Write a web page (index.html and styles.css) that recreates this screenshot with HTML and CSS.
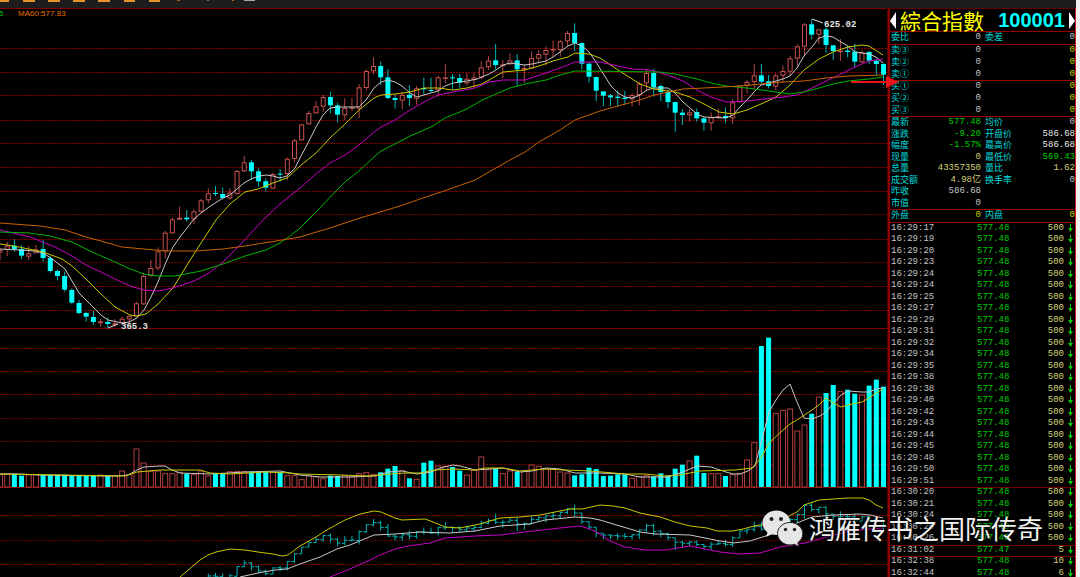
FILE: index.html
```html
<!DOCTYPE html>
<html lang="zh">
<head>
    <meta charset="UTF-8">
    <meta name="viewport" content="width=device-width, initial-scale=1.0">
    <title>綜合指數 100001</title>
    <link rel="stylesheet" href="styles.css">
</head>
<body>
    <div class="app">
        <div class="main">
            <div class="toolbar">
                <svg width="260" height="3" viewBox="0 0 260 3">
                    <path d="M0 0h9v2H0zM23 0h12v2H23zM48 0h12v2H48zM73 0h12v2H73zM98 0h12v2H98zM124 0h11v2h-11zM149 0h11v2h-11z" fill="#e8922e"/>
                    <path d="M177 0h3v1h-3zM207 0h2v1h-2zM232 0h2v1h-2z" fill="#a5652a"/>
                    <path d="M244 0h11v1h-11z" fill="#aaa"/>
                </svg>
            </div>
            <div class="content">
                <div class="chart">
                    <svg id="chart" viewBox="0 8 888 569"></svg>
                </div>
                <div class="panel">
                    <div class="title">
                        <svg width="6" height="17" viewBox="0 0 6 17"><path d="M6 0v17L0 9z" fill="#fff"/></svg>
                        <span class="name">綜合指數</span>
                        <span class="code">100001</span>
                        <svg width="6" height="17" viewBox="0 0 6 17"><path d="M0 0v17l6-8z" fill="#fff"/></svg>
                    </div>
                    <table class="quote">
                        <tbody>
                            <tr><th>委比</th><td>0</td><th>委差</th><td>0</td></tr>
                        </tbody>
                        <tbody class="book">
                            <tr><th>卖③</th><td>0</td><th></th><td>0</td></tr>
                            <tr><th>卖②</th><td>0</td><th></th><td>0</td></tr>
                            <tr><th>卖①</th><td>0</td><th></th><td>0</td></tr>
                        </tbody>
                        <tbody class="book">
                            <tr><th>买①</th><td>0</td><th></th><td>0</td></tr>
                            <tr><th>买②</th><td>0</td><th></th><td>0</td></tr>
                            <tr><th>买③</th><td>0</td><th></th><td>0</td></tr>
                        </tbody>
                        <tbody class="detail">
                            <tr><th>最新</th><td class="down">577.48</td><th>均价</th><td>0</td></tr>
                            <tr><th>涨跌</th><td class="down">-9.20</td><th>开盘价</th><td class="white">586.68</td></tr>
                            <tr><th>幅度</th><td class="down">-1.57%</td><th>最高价</th><td class="white">586.68</td></tr>
                            <tr><th>现量</th><td class="vol">0</td><th>最低价</th><td class="down">569.43</td></tr>
                            <tr><th>总量</th><td class="vol">43357350</td><th>量比</th><td class="vol">1.62</td></tr>
                            <tr><th>成交额</th><td class="vol">4.98亿</td><th>换手率</th><td>0</td></tr>
                            <tr><th>昨收</th><td>586.68</td><th></th><td></td></tr>
                            <tr><th>市值</th><td>0</td><th></th><td></td></tr>
                        </tbody>
                        <tbody>
                            <tr><th>外盘</th><td class="yellow">0</td><th>内盘</th><td class="yellow">0</td></tr>
                        </tbody>
                    </table>
                    <table class="ticks">
                        <tbody id="ticks"></tbody>
                    </table>
                </div>
            </div>
        </div>
        <div class="edge"></div>

        <svg class="pointer" width="48" height="14" viewBox="0 0 48 14">
            <path d="M0 6h35V1l13 6-13 6V8H0z" fill="#e8161b"/>
        </svg>

        <div class="watermark">
            <svg width="42" height="38" viewBox="0 0 42 38">
                <path d="M14.500 1.500C6.500 1.500 0.500 7 0.500 14c0 4 2 7 5 9.500L4 28l5.500-3c1.500.6 3.300.9 5 .9 8 0 14-5.500 14-12S22.500 1.500 14.500 1.500z" fill="#e6e6e6"/>
                <circle cx="9.500" cy="10" r="2" fill="#222"/>
                <circle cx="19" cy="10" r="2" fill="#222"/>
                <path d="M28 13.500c-7 0-12.500 5-12.500 11S21 36 28 36c1.500 0 3-.3 4.500-.7l4.500 2.400-1.200-4c3-2.200 5-5.200 5-9C40.800 18.500 35 13.500 28 13.500z" fill="#e6e6e6" stroke="#222"/>
                <circle cx="23.500" cy="20.500" r="1.700" fill="#222"/>
                <circle cx="32.500" cy="20.500" r="1.700" fill="#222"/>
            </svg>
            <span>鸿雁传书之国际传奇</span>
        </div>
    </div>
    <script src="script.js"></script>
</body>
</html>
```
FILE: styles.css
```css
body {
    margin: 0;
    background-color: #000;
    color: #c4c4c4;
    font-family: "Liberation Mono", "Noto Sans CJK SC", monospace;
    font-size: 9px;
}
.app {
    position: relative;
    display: flex;
    height: 100vh;
    overflow: hidden;
}
.main {
    flex: 1;
    min-width: 0;
}
.edge {
    width: 4px;
    background: #f0f0f0;
}
.toolbar {
    height: 8px;
    background: #1d1d1d;
}
.toolbar svg {
    display: block;
}
.content {
    display: flex;
}
.chart {
    flex: 1;
    min-width: 0;
}
.chart svg {
    display: block;
    width: 100%;
}
.chart text {
    font-weight: bold;
    fill: #e6e6e6;
}
.chart .legend {
    font-family: "Liberation Sans", sans-serif;
    font-size: 8px;
    font-weight: normal;
}

/* right side */
.panel {
    box-sizing: border-box;
    width: 188px;
    border-left: 2px solid #800;
    border-right: 1px solid #c22;
    border-top: 1px solid #600;
}
.title {
    display: flex;
    align-items: center;
    height: 22px;
    line-height: 20px;
}
.title .name {
    margin-left: 4px;
    color: #ff0;
    font-family: "Noto Sans CJK TC", sans-serif;
    font-size: 21px;
}
.title .code {
    margin: 0 4px 0 auto;
    color: #0ff;
    font-family: "Liberation Sans", sans-serif;
    font-size: 20px;
    font-weight: bold;
}
table {
    width: 100%;
    table-layout: fixed;
    border-collapse: collapse;
}
th, td {
    padding: 0;
    height: 12px;
    line-height: 10px;
    vertical-align: top;
    white-space: nowrap;
    text-align: right;
}
th {
    padding-left: 1px;
    color: #00dcdc;
    font-weight: normal;
    font-family: "Noto Sans CJK SC", sans-serif;
    text-align: left;
}
.quote th {
    width: 30px;
}
.quote th:nth-child(3) {
    padding-left: 4px;
}
.quote td:nth-child(2) {
    width: 60px;
}
.quote tbody {
    border-top: 1px solid #900;
}
.quote .book td:last-child, .yellow {
    color: #d2d200;
}
.quote .book tr:last-child > *, .detail tr:nth-child(even) > * {
    height: 11px;
}
.quote .down, .ticks .down {
    color: #00cc00;
}
.vol {
    color: #d2d278;
}
.white {
    color: #e8e8e8;
}
.ticks {
    border-top: 1px solid #900;
}
.ticks tr:nth-child(odd) > td {
    height: 11px;
}
.ticks td:nth-child(1) {
    width: 86px;
    padding-left: 1px;
    text-align: left;
}
.ticks td:nth-child(2) {
    width: 34px;
    text-align: left;
}
.ticks td:nth-child(3) {
    padding-right: 3px;
}
.ticks td:last-child {
    width: 8px;
}
.ticks .minute td {
    box-shadow: inset 0 1px #700;
}
.ticks svg {
    display: block;
    margin: 1px 0 0 1px;
}

/* overlays */
.pointer {
    position: absolute;
    top: 75px;
    right: 181px;
}
.watermark {
    position: absolute;
    right: 37px;
    bottom: 30px;
    display: flex;
    align-items: center;
    gap: 5px;
    color: #f0f0f0;
    font-family: "Noto Sans CJK SC", sans-serif;
    font-size: 26px;
    line-height: 38px;
    text-shadow: 1px 1px 2px #000;
    white-space: nowrap;
}
```
FILE: script.js
```js
// [up, high, body top, body bottom, low], in thirds of a pixel
const candles = [
    [1,745,750,758,780],[1,725,737,750,768],[0,718,737,747,755],[0,735,747,767,777],[1,738,760,770,780],
    [1,735,748,760,760],[0,720,747,774,785],[0,768,774,813,818],[0,808,813,828,841],[0,815,828,869,875],
    [0,865,870,908,913],[0,900,909,939,943],[0,935,939,950,965],[0,933,951,966,975],[1,957,964,969,980],
    [0,953,966,972,984],[1,958,970,975,980],[1,950,956,970,975],[1,945,948,958,970],[1,905,910,950,950],
    [1,818,828,913,915],[1,780,804,828,830],[1,742,754,805,810],[1,693,698,754,775],[1,653,658,700,700],
    [1,620,653,659,660],[0,630,653,658,665],[1,628,634,658,673],[1,597,601,635,638],[1,565,580,601,610],
    [0,558,579,582,588],[0,562,582,594,598],[1,565,578,595,600],[1,510,513,582,582],[1,468,487,514,516],
    [0,480,487,514,540],[0,505,514,544,560],[0,535,544,563,575],[1,518,522,566,566],[0,507,521,524,545],
    [1,473,476,522,540],[1,417,421,477,487],[1,372,373,421,421],[1,333,339,373,373],[1,303,319,340,340],
    [1,285,291,320,335],[0,275,291,316,340],[0,308,316,344,368],[1,295,324,346,360],[1,293,322,326,333],
    [1,253,262,326,354],[1,208,213,264,270],[1,172,198,214,223],[0,185,198,232,255],[0,208,232,294,297],
    [0,283,294,300,326],[1,275,285,302,328],[0,255,284,294,318],[1,258,265,296,314],[0,233,264,268,283],
    [0,233,270,273,278],[1,227,232,271,290],[1,193,232,236,250],[0,223,232,235,268],[0,222,234,248,263],
    [1,218,236,250,256],[1,218,232,240,264],[1,184,202,233,238],[1,168,182,202,210],[0,132,181,195,208],
    [1,180,194,197,234],[1,160,181,193,195],[0,162,181,208,258],[1,195,204,209,248],[1,155,174,206,206],
    [1,150,162,176,188],[1,140,150,164,197],[1,122,147,151,172],[1,120,124,150,170],[1,93,99,124,137],
    [0,70,99,129,153],[0,128,129,191,208],[0,187,191,230,248],[0,230,231,272,303],[0,274,274,287,318],
    [0,283,286,292,318],[0,272,290,294,320],[0,272,293,297,314],[1,280,285,298,320],[1,245,251,285,316],
    [1,207,219,250,270],[0,207,219,262,290],[0,253,258,276,303],[0,270,276,306,325],[0,306,306,338,395],
    [0,328,338,345,375],[1,327,337,346,365],[0,325,336,355,365],[0,353,355,368,392],[1,337,352,370,392],
    [1,325,348,352,357],[0,322,348,354,370],[1,297,307,355,372],[1,256,257,307,307],[1,240,246,257,280],
    [1,192,226,246,265],[0,192,226,245,255],[0,225,244,258,265],[1,220,226,260,270],[1,197,213,227,248],
    [1,168,175,215,228],[1,133,139,176,198],[1,69,73,140,168],[0,58,73,104,118],[1,88,88,104,132],
    [0,80,88,135,158],[0,135,136,153,180],[1,117,152,156,183],[0,138,152,156,172],[0,132,155,185,203],
    [1,150,157,187,190],[0,152,156,182,192],[0,178,182,192,225],[0,190,192,224,255]
];

// bar heights, same unit
const volumes = [
    37,39,40,34,36,37,37,37,37,37,35,36,35,35,36,35,34,48,37,114,72,47,48,40,40,44,40,37,48,33,41,41,
    46,47,46,46,46,45,44,45,34,34,22,34,31,25,34,33,34,31,40,43,38,44,55,63,49,26,23,73,79,63,62,60,
    49,36,50,90,52,56,40,48,46,48,66,62,54,54,45,42,35,38,58,54,33,34,38,38,26,32,34,32,41,34,55,67,
    78,94,42,40,40,33,37,41,81,133,423,448,221,230,234,168,186,220,270,282,306,286,292,280,276,304,322,301
];

const lines = [
    ["#c8c8c8", "0,249 20,250 35,251 43,253 51,258 65,269 72,281 79,293 94,308 101,315 108,320 122,323 129,322 137,318 144,310 151,297 158,282 166,262 173,247 180,237 187,228 194,219 201,213 209,207 223,198 230,195 237,189 244,183 251,179 259,176 266,175 273,176 280,178 287,176 295,168 300,158 309,141 316,127 323,115 330,108 338,107 359,107 366,100 374,88 381,82 388,80 395,82 402,86 410,93 417,97 424,95 431,93 438,91 445,86 453,83 467,81 477,79 489,74 496,70 503,65 510,63 525,65 532,64 546,61 553,57 560,52 568,46 575,43 582,46 589,52 596,62 604,75 611,86 618,93 625,97 632,98 640,95 647,90 654,88 668,88 675,93 683,102 690,108 697,114 704,117 726,118 733,115 740,107 747,100 754,92 761,85 769,83 783,79 790,76 797,68 804,56 812,47 819,38 826,36 833,37 841,42 848,46 855,52 862,53 869,54 876,57 883,63"],
    ["#c8c800", "0,244 14,246 43,252 62,259 72,266 86,279 101,294 115,307 130,315 137,316 146,314 158,304 173,288 187,265 201,243 216,220 230,204 245,192 258,189 273,183 287,178 300,166 316,153 330,138 345,124 359,110 374,98 381,95 395,94 410,92 424,88 438,88 453,90 467,88 482,84 496,76 503,72 525,70 539,66 553,61 568,57 575,53 589,54 600,58 618,70 640,84 654,89 675,92 690,97 704,104 719,112 733,114 747,110 761,104 776,97 790,85 804,70 819,59 833,52 848,47 862,45 869,46 883,55"],
    ["#c800c8", "0,230 30,237 55,247 72,256 86,265 101,272 115,279 130,286 144,290 158,291 173,288 194,281 209,273 223,262 237,248 251,233 266,217 280,204 300,188 316,174 330,163 345,155 359,145 374,132 381,127 395,120 410,110 424,102 438,95 453,92 475,88 489,82 503,80 525,80 546,73 560,68 575,62 600,62 618,66 632,69 650,70 668,75 683,81 697,90 711,97 726,102 747,101 783,97 797,95 812,88 826,81 841,74 855,67 869,61 883,59"],
    ["#00b400", "0,232 30,233 50,236 72,242 86,249 101,256 115,262 130,269 144,274 158,276 175,276 201,271 223,264 245,256 266,250 280,243 290,236 300,228 316,212 337,190 345,182 359,171 374,157 381,151 395,144 410,136 431,127 445,118 467,109 482,100 496,94 510,88 525,84 546,80 560,75 575,71 660,72 675,74 697,79 711,83 726,86 747,88 769,91 790,94 804,92 819,88 833,84 848,81 869,79 883,77"],
    ["#c86400", "0,223 40,226 65,230 86,237 101,241 122,247 144,249 166,251 195,251 223,249 245,246 270,242 300,237 330,228 360,218 400,206 420,199 447,190 475,180 496,168 510,160 525,152 539,142 560,130 575,120 600,111 618,106 640,100 654,95 668,92 683,89 704,88 740,86 761,84 783,82 804,81 826,78 848,76 883,75"],
    // volume averages
    ["#c8c8c8", "0,474 20,474 40,475 105,476 118,476 128,475 137,470 144,467 160,466 165,466 172,470 180,473 210,474 245,472 280,471 300,475 320,477 350,477 375,476 388,472 402,471 417,474 431,472 440,468 453,465 460,466 475,470 489,469 503,468 520,472 532,471 546,468 560,469 575,473 589,473 600,473 625,474 640,477 668,477 683,472 697,466 711,467 726,472 733,474 740,474 748,471 755,466 761,443 769,412 776,400 783,390 790,384 797,402 804,418 812,419 820,416 826,412 833,404 841,395 848,391 862,392 869,392 876,389 883,388"],
    ["#c8c800", "0,474 60,475 125,476 137,472 160,470 185,470 200,470 210,473 230,474 265,472 290,473 300,474 340,475 370,476 390,474 405,473 420,473 435,470 453,469 475,470 485,468 503,468 520,471 545,469 565,470 590,471 625,474 645,474 665,476 680,475 700,471 735,470 752,468 761,458 769,443 783,430 790,424 797,420 812,410 820,404 826,398 833,403 841,407 848,405 862,402 869,398 876,393 883,389"],
    // boll
    ["#c8c800", "180,577 200,560 208,555 216,552 230,549 245,550 258,552 273,554 282,556 288,555 300,546 316,537 325,531 345,520 360,514 374,511 381,512 395,518 402,520 425,519 433,522 445,527 460,528 480,524 500,518 520,517 540,515 560,511 570,509 582,509 600,505 613,506 625,508 640,513 660,517 675,522 690,526 707,528 717,531 733,531 743,529 754,526 773,523 787,517 797,512 804,505 819,500 833,499 848,498 863,498 869,500 876,505 883,508"],
    ["#c8c8c8", "240,577 258,573 275,570 287,569 300,564 320,557 337,549 350,545 374,535 395,534 420,532 450,533 475,531 500,526 530,524 545,520 575,517 590,518 600,520 620,526 640,532 655,534 690,535 705,538 720,541 733,543 750,541 775,533 797,523 812,517 833,515 860,514 870,515 883,518"],
    ["#c800c8", "330,577 350,569 370,560 380,555 395,549 408,546 430,543 445,538 475,536 500,535 525,532 560,528 580,526 590,529 600,534 610,541 625,547 645,550 665,550 690,546 705,549 720,552 740,554 760,553 780,547 805,543 830,536 850,531 870,529 883,528"]
];

const bright = [48, 72, 95, 120, 143, 167, 191, 239, 286, 310, 348, 371, 394, 515, 564];
const dim = [214, 262, 418, 441, 464, 540];
const solid = [8, 328, 487];

let out = "";
bright.forEach(y => out += `<path d="M0 ${y + 0.5}H887" stroke="#860000" stroke-dasharray="2 1"/>`);
dim.forEach(y => out += `<path d="M0 ${y + 0.5}H887" stroke="#660000" stroke-dasharray="2 1"/>`);
solid.forEach(y => out += `<path d="M0 ${y + 0.5}H887" stroke="#880000"/>`);
out += `<path d="M887.5 9V577" stroke="#500000"/>`;

candles.forEach((c, i) => {
    const [up, high, top, bottom, low] = c.map((v, k) => k ? v / 3 : v);
    const x = 7.183 * i;
    const h = Math.max(bottom - top, 1);
    const vh = volumes[i] / 3;
    if (up) {
        out += `<path d="M${x} ${high}V${low}" stroke="#b44646"/>`;
        out += `<rect x="${x - 2}" y="${top + 0.5}" width="4" height="${Math.max(h - 1, 0.5)}" fill="#000" stroke="#c85050"/>`;
        out += `<rect x="${x - 2.5}" y="${487 - vh}" width="5" height="${vh}" fill="#000" stroke="#b04040"/>`;
    } else {
        out += `<path d="M${x} ${high}V${low}" stroke="#00b4b4"/>`;
        out += `<rect x="${x - 2.5}" y="${top}" width="5" height="${h}" fill="#0ff"/>`;
        out += `<rect x="${x - 2.5}" y="${487 - vh}" width="5" height="${vh}" fill="#0ff"/>`;
    }
    // same prices on the smaller boll scale
    const s = y => 495 + 0.419 * y;
    const open = s(up ? bottom : top), close = s(up ? top : bottom);
    out += `<path d="M${x} ${s(high)}V${s(low)}M${x - 3} ${open}h3M${x} ${close}h3" stroke="#00b4b4" fill="none"/>`;
});

lines.forEach(l => out += `<polyline points="${l[1]}" fill="none" stroke="${l[0]}"/>`);

out += `<path d="M812 19l11 4M108 328l10-4" stroke="#ddd"/>`;
out += `<text x="824" y="27">625.02</text><text x="121" y="329">365.3</text>`;
out += `<text class="legend" x="-1" y="16" style="fill:#00c800">5</text>`;
out += `<text class="legend" x="18" y="16" style="fill:#e07000">MA60:577.83</text>`;
document.getElementById("chart").innerHTML = out;

const times = ["29:17", "29:19", "29:20", "29:23", "29:24", "29:24", "29:25", "29:27", "29:29", "29:31", "29:32",
    "29:34", "29:35", "29:38", "29:38", "29:40", "29:42", "29:43", "29:44", "29:45", "29:48", "29:50", "29:51",
    "30:20", "30:21", "30:24", "30:25", "30:26", "31:02", "32:38", "32:44"];
const special = { "31:02": ["577.47", 5], "32:38": ["577.48", 10], "32:44": ["577.48", 6] };

document.getElementById("ticks").innerHTML = times.map((t, i) => {
    const [price, vol] = special[t] || ["577.48", 500];
    const minute = i > 0 && t.slice(0, 2) !== times[i - 1].slice(0, 2);
    return `<tr${minute ? ' class="minute"' : ""}>
        <td>16:${t}</td>
        <td class="down">${price}</td>
        <td class="vol">${vol}</td>
        <td><svg width="5" height="8" viewBox="0 0 5 8"><path d="M2 0h1v4h2L2.500 8 0 4h2z" fill="#00cc00"/></svg></td>
    </tr>`;
}).join("");
```
